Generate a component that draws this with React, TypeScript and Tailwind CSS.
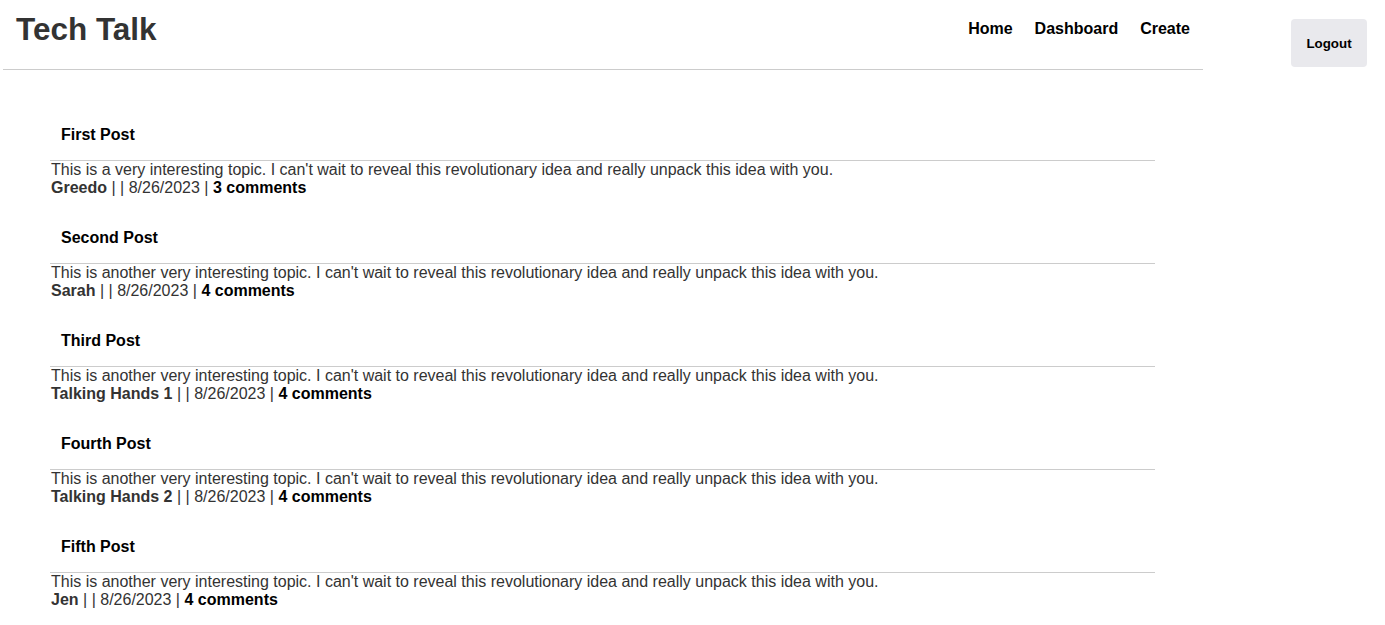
const posts = [
  {
    id: 1,
    title: "First Post",
    body: "This is a very interesting topic. I can't wait to reveal this revolutionary idea and really unpack this idea with you.",
    author: "Greedo",
    date: "8/26/2023",
    comments: 3,
  },
  {
    id: 2,
    title: "Second Post",
    body: "This is another very interesting topic. I can't wait to reveal this revolutionary idea and really unpack this idea with you.",
    author: "Sarah",
    date: "8/26/2023",
    comments: 4,
  },
  {
    id: 3,
    title: "Third Post",
    body: "This is another very interesting topic. I can't wait to reveal this revolutionary idea and really unpack this idea with you.",
    author: "Talking Hands 1",
    date: "8/26/2023",
    comments: 4,
  },
  {
    id: 4,
    title: "Fourth Post",
    body: "This is another very interesting topic. I can't wait to reveal this revolutionary idea and really unpack this idea with you.",
    author: "Talking Hands 2",
    date: "8/26/2023",
    comments: 4,
  },
  {
    id: 5,
    title: "Fifth Post",
    body: "This is another very interesting topic. I can't wait to reveal this revolutionary idea and really unpack this idea with you.",
    author: "Jen",
    date: "8/26/2023",
    comments: 4,
  },
];

const navItems = ["Home", "Dashboard", "Create"];

const App = () => {
  return (
    <div className="min-h-screen bg-white text-[#333] font-['Liberation_Sans',Arial,sans-serif]">
      <div className="flex items-start">
        <header className="ml-[3px] w-[1200px] h-[70px] border-b border-[#ccc] flex justify-between items-start px-[13px]">
          <h1 className="mt-[11px] text-[31.5px] leading-[37px] font-bold text-[#333]">Tech Talk</h1>
          <nav className="mt-[20px] flex gap-[22px]">
            {navItems.map((item) => (
              <a key={item} href="#" className="text-base leading-[18px] font-bold text-black">
                {item}
              </a>
            ))}
          </nav>
        </header>
        <button className="ml-[88px] mt-[19px] w-[76px] h-[48px] pt-[2px] rounded-[4px] bg-[#e9e9ed] text-[13.33px] font-bold text-black">
          Logout
        </button>
      </div>

      <main className="ml-[50px] w-[1105px] pt-[56px] flex flex-col gap-[32px]">
        {posts.map((post) => (
          <article key={post.id}>
            <h2 className="pl-[11px] pb-[16px] text-base leading-[18px] font-bold text-black">{post.title}</h2>
            <div className="border-t border-[#ccc] pl-px text-base leading-[18px]">
              <p>{post.body}</p>
              <p>
                <span className="font-bold">{post.author}</span> | | {post.date} |{" "}
                <a href="#" className="font-bold text-black">
                  {post.comments} comments
                </a>
              </p>
            </div>
          </article>
        ))}
      </main>
    </div>
  );
};

export default App;
